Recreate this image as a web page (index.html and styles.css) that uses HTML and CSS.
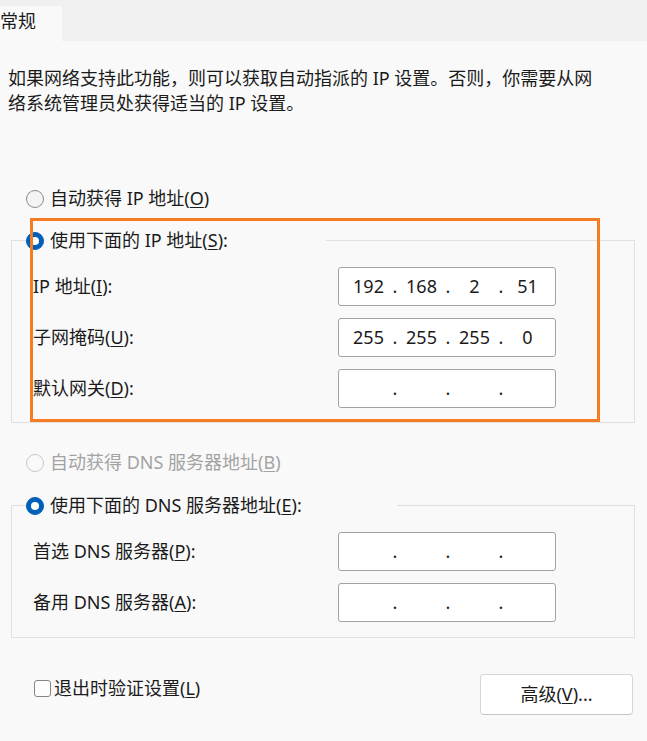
FILE: index.html
```html
<!DOCTYPE html>
<html lang="zh-CN">
<head>
<meta charset="utf-8">
<title>Internet 协议版本 4 (TCP/IPv4) 属性</title>
<link rel="stylesheet" href="styles.css">
</head>
<body>
<div class="dialog">
  <div class="tabstrip"><div class="tab">常规</div></div>

  <p class="intro">如果网络支持此功能，则可以获取自动指派的 IP 设置。否则，你需要从网<br>络系统管理员处获得适当的 IP 设置。</p>

  <div class="option opt-auto-ip"><span class="radio"></span><span>自动获得 IP 地址(<u>O</u>)</span></div>

  <fieldset class="group group-ip">
    <legend class="legend legend-ip"><span class="radio checked"></span><span>使用下面的 IP 地址(<u>S</u>):</span></legend>
    <div class="row">
      <span class="lbl">IP 地址(<u>I</u>):</span>
      <div class="ipbox"><span class="seg">192</span><span class="dot">.</span><span class="seg">168</span><span class="dot">.</span><span class="seg">2</span><span class="dot">.</span><span class="seg">51</span></div>
    </div>
    <div class="row">
      <span class="lbl">子网掩码(<u>U</u>):</span>
      <div class="ipbox"><span class="seg">255</span><span class="dot">.</span><span class="seg">255</span><span class="dot">.</span><span class="seg">255</span><span class="dot">.</span><span class="seg">0</span></div>
    </div>
    <div class="row">
      <span class="lbl">默认网关(<u>D</u>):</span>
      <div class="ipbox"><span class="seg"></span><span class="dot">.</span><span class="seg"></span><span class="dot">.</span><span class="seg"></span><span class="dot">.</span><span class="seg"></span></div>
    </div>
  </fieldset>

  <div class="option opt-auto-dns disabled"><span class="radio"></span><span>自动获得 DNS 服务器地址(<u>B</u>)</span></div>

  <fieldset class="group group-dns">
    <legend class="legend legend-dns"><span class="radio checked"></span><span>使用下面的 DNS 服务器地址(<u>E</u>):</span></legend>
    <div class="row">
      <span class="lbl">首选 DNS 服务器(<u>P</u>):</span>
      <div class="ipbox"><span class="seg"></span><span class="dot">.</span><span class="seg"></span><span class="dot">.</span><span class="seg"></span><span class="dot">.</span><span class="seg"></span></div>
    </div>
    <div class="row">
      <span class="lbl">备用 DNS 服务器(<u>A</u>):</span>
      <div class="ipbox"><span class="seg"></span><span class="dot">.</span><span class="seg"></span><span class="dot">.</span><span class="seg"></span><span class="dot">.</span><span class="seg"></span></div>
    </div>
  </fieldset>

  <div class="footer">
    <div class="check"><span class="box"></span><span>退出时验证设置(<u>L</u>)</span></div>
    <div class="button">高级(<u>V</u>)...</div>
  </div>

  <div class="annot"></div>
</div>
</body>
</html>
```

FILE: styles.css
```css
html, body {
  margin: 0;
  padding: 0;
  background: #f9f9f9;
  overflow: hidden;
}

.dialog {
  position: relative;
  width: 647px;
  height: 741px;
  background: #f9f9f9;
  color: #1b1b1b;
  font-family: "Noto Sans", "Noto Sans CJK SC", sans-serif;
  font-size: 18px;
  line-height: 25px;
}

u {
  text-decoration: underline;
  text-decoration-thickness: 1px;
  text-underline-offset: 2px;
}

.tabstrip {
  height: 41px;
  background: #f0f0f0;
  box-sizing: border-box;
  padding-top: 6px;
  display: flex;
}

.tab {
  width: 62px;
  height: 35px;
  box-sizing: border-box;
  background: #f9f9f9;
  padding-top: 3px;
  padding-left: 0;
  white-space: nowrap;
}

.intro {
  margin: 25px 0 0 8px;
  white-space: nowrap;
}

.option {
  display: flex;
  align-items: center;
  height: 25px;
  padding-left: 26px;
  white-space: nowrap;
}

.opt-auto-ip {
  margin-top: 70px;
}

.opt-auto-dns {
  margin-top: 27px;
}

.disabled {
  color: #a3a3a3;
}

.radio {
  flex: none;
  width: 18px;
  height: 18px;
  box-sizing: border-box;
  border-radius: 50%;
  border: 1px solid #8a8a8a;
  background: #f4f4f4;
  margin-right: 6px;
  display: flex;
  align-items: center;
  justify-content: center;
}

.disabled .radio {
  border-color: #c9c9c9;
  background: #f9f9f9;
}

.radio.checked {
  background: #005fb8;
  border-color: #005fb8;
}

.radio.checked::after {
  content: "";
  width: 8px;
  height: 8px;
  border-radius: 50%;
  background: #ffffff;
}

.group {
  margin: 0 12px 0 11px;
  padding: 14px 0 14px 14px;
  border: 1px solid #e0e0e0;
  min-width: 0;
  display: flex;
  flex-direction: column;
  gap: 12px;
}

.group-ip {
  margin-top: 17px;
}

.group-dns {
  margin-top: 18px;
  padding-bottom: 15px;
}

.legend {
  padding: 0;
  display: flex;
  align-items: center;
  height: 25px;
  white-space: nowrap;
  box-sizing: border-box;
}

.legend-ip {
  width: 300px;
}

.legend-dns {
  width: 371px;
}

.row {
  display: flex;
  align-items: center;
  margin-left: 7px;
}

.lbl {
  width: 305px;
  white-space: nowrap;
}

.ipbox {
  width: 218px;
  height: 39px;
  box-sizing: border-box;
  border: 1px solid #a2a2a2;
  border-radius: 3px;
  background: #ffffff;
  display: flex;
  align-items: center;
  padding-left: 6px;
  color: #1a1a1a;
}

.seg {
  width: 47px;
  text-align: center;
}

.dot {
  width: 6px;
  text-align: center;
}

.footer {
  margin-top: 36px;
  display: flex;
  justify-content: space-between;
  align-items: flex-start;
  padding-left: 34px;
  padding-right: 14px;
}

.check {
  display: flex;
  align-items: center;
  margin-top: 2px;
  white-space: nowrap;
}

.box {
  width: 17px;
  height: 17px;
  box-sizing: border-box;
  border: 1px solid #858585;
  border-radius: 3px;
  background: #fdfdfd;
  margin-right: 3px;
}

.button {
  width: 153px;
  height: 41px;
  box-sizing: border-box;
  border: 1px solid #d6d6d6;
  border-bottom-color: #c4c4c4;
  border-radius: 4px;
  background: #ffffff;
  display: flex;
  align-items: center;
  justify-content: center;
  white-space: nowrap;
}

.annot {
  position: absolute;
  left: 30px;
  top: 218px;
  width: 570px;
  height: 204px;
  box-sizing: border-box;
  border: 3px solid #f57c22;
  pointer-events: none;
}
```
